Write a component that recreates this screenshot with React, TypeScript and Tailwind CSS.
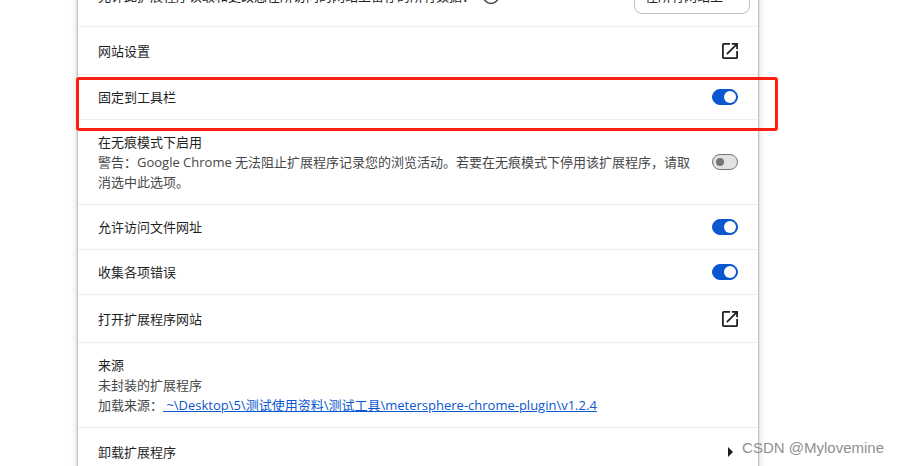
import React, { useId, useState } from 'react';
import { Info } from 'lucide-react';

const ROW = 'flex items-center justify-between border-t border-[#eeeeee] px-5';

function OpenIcon() {
  return (
    <svg viewBox="3 3 18 18" className="size-4" fill="currentColor" aria-hidden="true">
      <path d="M19 19H5V5h7V3H5a2 2 0 0 0-2 2v14a2 2 0 0 0 2 2h14c1.1 0 2-.9 2-2v-7h-2v7zM14 3v2h3.59l-9.83 9.83 1.41 1.41L19 6.41V10h2V3h-7z" />
    </svg>
  );
}

type ToggleRowProps = {
  label: string;
  note?: string;
  defaultOn?: boolean;
  highlighted?: boolean;
};

function ToggleRow({ label, note, defaultOn = false, highlighted = false }: ToggleRowProps) {
  const id = useId();
  const [on, setOn] = useState(defaultOn);

  return (
    <div className={`${ROW} relative ${note ? 'py-3' : 'h-[45px]'}`}>
      <div className="max-w-[594px]">
        <label htmlFor={id} className="block">{label}</label>
        {note && <p className="text-[#474747]">{note}</p>}
      </div>
      <input
        id={id}
        type="checkbox"
        role="switch"
        checked={on}
        onChange={(e) => setOn(e.target.checked)}
        className="flex h-4 w-[26px] shrink-0 cursor-pointer appearance-none items-center rounded-full border border-[#747775] bg-[#e1e3e1] before:ml-[3px] before:size-2 before:rounded-full before:bg-[#747775] checked:border-[#0b57d0] checked:bg-[#0b57d0] checked:before:ml-[11px] checked:before:size-3 checked:before:bg-white"
      />
      {/* Callout frame */}
      {highlighted && (
        <div className="pointer-events-none absolute -left-0.5 -right-5 top-0.5 z-10 h-[54px] rounded-[3px] border-3 border-[#ff1e10]" />
      )}
    </div>
  );
}

function LinkRow({ label }: { label: string }) {
  return (
    <div className={`${ROW} h-12`}>
      <span>{label}</span>
      <a href="#" aria-label={label}>
        <OpenIcon />
      </a>
    </div>
  );
}

export default function App() {
  return (
    <div className="relative h-screen overflow-hidden bg-white font-['Open_Sans','Noto_Sans_CJK_SC',sans-serif] text-[13px] leading-5 text-[#1f1f1f]">
      <main className="-mt-[34px] ml-[78px] min-h-[calc(100vh+60px)] max-w-[680px] bg-white shadow-[0_0_2px_rgba(0,0,0,0.5),0_1px_8px_rgba(0,0,0,0.2)]">
        {/* Site access */}
        <div className="flex h-[60px] items-center pl-5 pr-2">
          <label htmlFor="site-access">允许此扩展程序读取和更改您在所访问的网站上留存的所有数据：</label>
          <Info className="ml-[7px] size-[18px] text-[#474747]" />
          <select
            id="site-access"
            className="ml-auto h-9 w-[116px] appearance-none rounded-lg border border-[#c0c0c0] bg-white px-2.5"
          >
            <option>在所有网站上</option>
            <option>点击时</option>
            <option>在特定网站上</option>
          </select>
        </div>

        <LinkRow label="网站设置" />
        <ToggleRow label="固定到工具栏" defaultOn highlighted />
        <ToggleRow
          label="在无痕模式下启用"
          note="警告：Google Chrome 无法阻止扩展程序记录您的浏览活动。若要在无痕模式下停用该扩展程序，请取消选中此选项。"
        />
        <ToggleRow label="允许访问文件网址" defaultOn />
        <ToggleRow label="收集各项错误" defaultOn />
        <LinkRow label="打开扩展程序网站" />

        <div className={`${ROW} py-3`}>
          <div>
            <h2>来源</h2>
            <p className="text-[#474747]">未封装的扩展程序</p>
            <p className="text-[#474747]">
              加载来源：
              <a href="#" className="text-[#0b57d0] underline">
                &nbsp;~\Desktop\5\测试使用资料\测试工具\metersphere-chrome-plugin\v1.2.4
              </a>
            </p>
          </div>
        </div>

        <button type="button" className={`${ROW} h-[49px] w-full text-left`}>
          <span>卸载扩展程序</span>
          <svg viewBox="0 0 5 10" className="mr-[5px] h-2.5 w-[5px]" fill="currentColor" aria-hidden="true">
            <path d="M0 0l5 5-5 5z" />
          </svg>
        </button>
      </main>

      <span className="absolute bottom-2 right-3.5 font-['Liberation_Sans',sans-serif] text-[15px] leading-5 text-[#8f8f8f]">
        CSDN @Mylovemine
      </span>
    </div>
  );
}
